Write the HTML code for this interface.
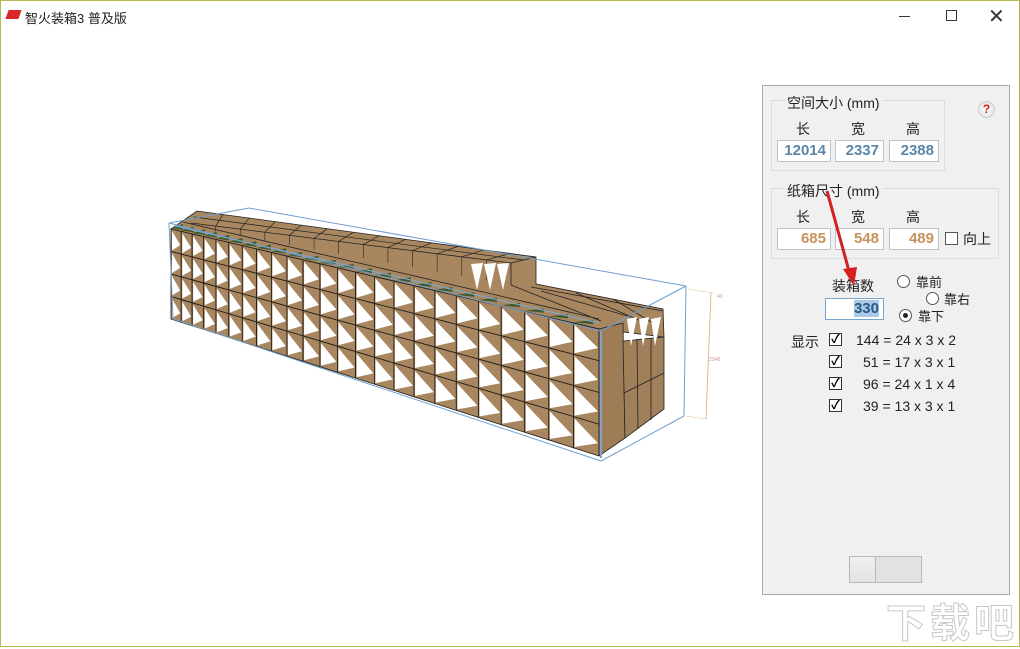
<!DOCTYPE html>
<html><head><meta charset="utf-8"><style>
*{margin:0;padding:0;box-sizing:border-box}
body{width:1020px;height:647px;overflow:hidden;background:#fff;font-family:"Liberation Sans","Noto Sans CJK SC",sans-serif;position:relative;border:1px solid #b8b850}
.a{position:absolute}
.t{font-size:14px;color:#222}
.inp{position:absolute;height:22px;border:1px solid #b9c4cc;background:#fff;font-weight:bold;font-size:15px;text-align:right;padding-right:4px;line-height:20px}
.blue{color:#5b86a8}.org{color:#c8935a}
.gb{position:absolute;border:1px solid #dcdcdc}
.cb{position:absolute;width:13px;height:13px;border:1px solid #333;background:#fff;font-size:12px;line-height:11px;text-align:center;font-weight:bold}
.rd{position:absolute;width:13px;height:13px;border:1px solid #555;border-radius:50%;background:#fff}
</style></head><body>
<div class="a" style="left:6px;top:9px;width:13px;height:9px;background:#d8262b;transform:skewX(-20deg)"></div>
<div class="a t" style="left:24px;top:7px;font-size:13px">智火装箱3 普及版</div>
<div class="a" style="left:898px;top:15px;width:11px;height:1px;background:#333"></div>
<div class="a" style="left:945px;top:9px;width:11px;height:11px;border:1px solid #333"></div>
<div class="a" style="left:987px;top:3px;font-size:20px;color:#333">✕</div>

<svg class="a" style="left:0;top:0" width="1020" height="647" id="sv"></svg>

<div class="a" style="left:761px;top:84px;width:248px;height:510px;background:#f0f0f0;border:1px solid #a8a8a8"></div>
<div class="gb" style="left:770px;top:99px;width:174px;height:71px"></div>
<div class="a t" style="left:784px;top:92px;font-size:14px;background:#f0f0f0;padding:0 2px">空间大小 (mm)</div>
<div class="a" style="left:977px;top:100px;width:17px;height:17px;border-radius:50%;background:radial-gradient(#fff,#ddd);border:1px solid #ccc;color:#d02020;font-weight:bold;font-size:12px;text-align:center;line-height:15px">?</div>
<div class="a t" style="left:795px;top:118px">长</div><div class="a t" style="left:850px;top:118px">宽</div><div class="a t" style="left:905px;top:118px">高</div>
<div class="inp blue" style="left:776px;top:139px;width:54px">12014</div>
<div class="inp blue" style="left:834px;top:139px;width:49px">2337</div>
<div class="inp blue" style="left:888px;top:139px;width:50px">2388</div>
<div class="gb" style="left:770px;top:187px;width:228px;height:71px"></div>
<div class="a t" style="left:784px;top:180px;background:#f0f0f0;padding:0 2px">纸箱尺寸 (mm)</div>
<div class="a t" style="left:795px;top:206px">长</div><div class="a t" style="left:850px;top:206px">宽</div><div class="a t" style="left:905px;top:206px">高</div>
<div class="inp org" style="left:776px;top:227px;width:54px">685</div>
<div class="inp org" style="left:834px;top:227px;width:49px">548</div>
<div class="inp org" style="left:888px;top:227px;width:50px">489</div>
<div class="cb" style="left:944px;top:231px;border-color:#555"></div>
<div class="a t" style="left:962px;top:228px">向上</div>
<div class="a t" style="left:831px;top:275px">装箱数</div>
<div class="inp" style="left:824px;top:297px;width:59px;border-color:#7aa7d0;color:#2b5a85"><span style="background:#a9cbe8">330</span></div>
<div class="rd" style="left:896px;top:274px"></div><div class="a t" style="left:915px;top:271px;font-size:13px">靠前</div>
<div class="rd" style="left:925px;top:291px"></div><div class="a t" style="left:943px;top:288px;font-size:13px">靠右</div>
<div class="rd" style="left:898px;top:308px"></div><div class="a" style="left:902px;top:312px;width:5px;height:5px;border-radius:50%;background:#222"></div><div class="a t" style="left:917px;top:305px;font-size:13px">靠下</div>
<div class="a t" style="left:790px;top:331px">显示</div>
<div class="cb" style="left:828px;top:332px">✓</div><div class="a t" style="left:855px;top:331px">144 = 24 x 3 x 2</div>
<div class="cb" style="left:828px;top:354px">✓</div><div class="a t" style="left:862px;top:353px">51 = 17 x 3 x 1</div>
<div class="cb" style="left:828px;top:376px">✓</div><div class="a t" style="left:862px;top:375px">96 = 24 x 1 x 4</div>
<div class="cb" style="left:828px;top:398px">✓</div><div class="a t" style="left:862px;top:397px">39 = 13 x 3 x 1</div>
<div class="a" style="left:848px;top:555px;width:27px;height:27px;border:1px solid #b8b8b8;background:linear-gradient(#f0f0f0,#e2e2e2)"></div>
<div class="a" style="left:874px;top:555px;width:47px;height:27px;border:1px solid #b8b8b8;background:#e2e2e2"></div>
<svg class="a" style="left:0;top:0;pointer-events:none" width="1020" height="647">
<line x1="826" y1="190" x2="848" y2="270" stroke="#d42020" stroke-width="3"/>
<polygon points="842,268 856,266 853,285" fill="#d42020"/>
</svg>
<div class="a" style="left:885px;top:590px;font-size:40px;font-weight:bold;color:#fff;-webkit-text-stroke:1px #c8c8c8;letter-spacing:4px;font-family:'Noto Sans CJK SC',sans-serif">下载吧</div>

<script>
var s='';
function P(pts,f,st){s+='<polygon points="'+pts.map(p=>p.join(',')).join(' ')+'" fill="'+f+'"'+(st?' stroke="'+st+'" stroke-width="0.8"':'')+'/>';}
function L(a,b,c,w){s+='<line x1="'+a[0]+'" y1="'+a[1]+'" x2="'+b[0]+'" y2="'+b[1]+'" stroke="'+c+'" stroke-width="'+(w||1)+'"/>';}
var brown='#a88660';
// backing
P([[170,228],[196,210],[535,256],[535,283],[662,308],[663,336],[598,328]],brown,'#222');
// lower right block top grid
L([510,284],[600,320],'#222',0.8);L([540,290],[630,316],'#222',0.8);L([575,292],[640,320],'#222',0.8);L([612,298],[652,322],'#222',0.8);L([530,286],[662,310],'#222',0.8);
// upper block top grid
for(var i=1;i<13;i++){var f=i/13;L([190+320*f,222+40*f],[196+339*f,210+46*f],'#222',0.7);}
L([193,216],[522,259],'#222',0.7);L([190,222],[510,262],'#222',0.8);
L([510,262],[535,256],'#222',0.8);L([510,262],[510,284],'#222',0.8);
for(var i=1;i<13;i++){var f=i/13;var x=190+320*f;L([x,222+40*f],[x,226+58*f],'#222',0.6);}
for(var i=0;i<3;i++){var x=470+i*13;P([[x,263],[x+12,262],[x+6,289]],'#fff');}
L([182,221],[598,318],'#222',0.8);
// green triangles
for(var i=0;i<24;i++){var t=i/24,x=170+428*(t*(1+0.8*t)/1.8);var y=228+(x-170)*0.234;P([[x,y-1],[x+12+8*t,y-5+2*t],[x+12+8*t,y+1]],'#3f5a2b');}
L([174,225],[598,322],'#7fa6c8',1.2);
// front face
function pt(u,v){var tu=u*(1+0.8*u)/1.8;var x=170+428*tu;var yt=228+100*tu,yb=318+137*tu;return [x,yt+(yb-yt)*v];}
for(var i=0;i<24;i++)for(var j=0;j<4;j++){var u0=i/24,u1=(i+1)/24,v0=j/4,v1=(j+1)/4;
var a=pt(u0,v0),b=pt(u1,v0),c=pt(u1,v1),d=pt(u0,v1);
P([a,b,c,d],brown,'#1a1a1a');
var m=[(b[0]+c[0])/2-1,(b[1]*0.4+c[1]*0.6)];
P([[a[0]+1,a[1]+2],m,[d[0]+1,d[1]-1]],'#fff');}
// right side of front block
P([[598,328],[622,322],[624,437],[598,455]],'#9d7c56','#222');
L([600,330],[600,457],'#7fa6c8',2);
// second block
P([[622,340],[663,336],[663,408],[624,437]],'#a0805a','#222');
L([636,339],[637,428],'#222',0.8);L([650,338],[650,419],'#222',0.8);L([623,392],[663,372],'#222',0.8);
for(var i=0;i<3;i++){var x=626+i*12;P([[x,318],[x+10,316],[x+4,345]],'#fff');}
// blue box
var bl='#6f9fcf';
L([168,222],[248,207],bl);L([248,207],[685,285],bl);L([168,222],[600,330],bl);L([600,330],[685,285],bl);
L([168,222],[172,318],bl);L([685,285],[683,415],bl);L([600,460],[683,415],bl);L([172,318],[600,460],bl);
// dim line
L([687,288],[712,292],'#e0c4a0',0.6);L([685,415],[705,418],'#e0c4a0',0.6);L([710,292],[705,418],'#d9a870',0.8);
s+='<text x="716" y="297" font-size="5" fill="#c99">40</text><text x="708" y="360" font-size="5" fill="#c99">2348</text>';
document.getElementById('sv').innerHTML=s;
</script>
</body></html>
